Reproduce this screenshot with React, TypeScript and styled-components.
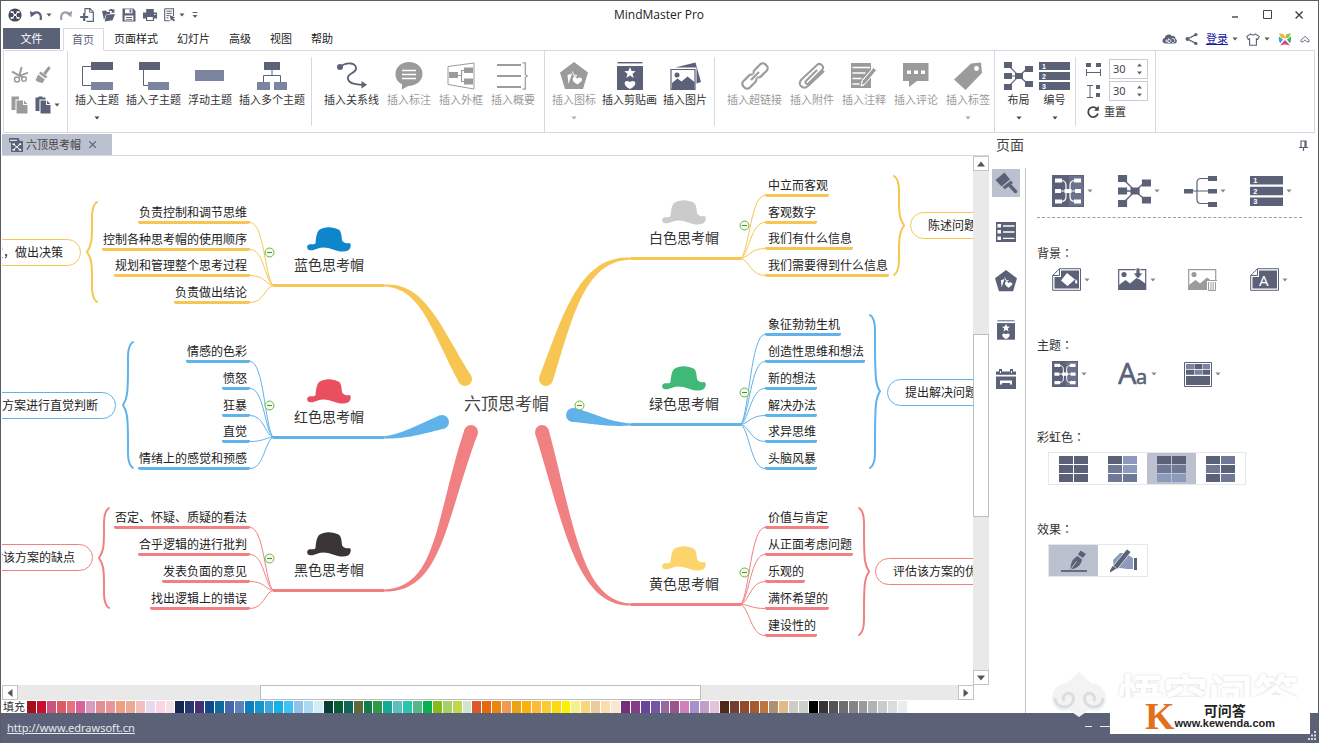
import React from "react";
import styled, { createGlobalStyle, css } from "styled-components";

const ink = "#5b6277";
const inkLight = "#7d84a0";
const mute = "#9b9b9b";
const rule = "#d8d9de";
const active = "#bcc1d0";

const GlobalStyle = createGlobalStyle`
  *, *::before, *::after { box-sizing: border-box; }
  body {
    margin: 0;
    background: #fff;
    color: #333;
    font-family: "Noto Sans", "Noto Sans CJK SC", sans-serif;
    font-size: 11px;
    line-height: 16px;
  }
  button {
    margin: 0;
    padding: 0;
    border: 0;
    background: none;
    color: inherit;
    font: inherit;
    cursor: pointer;
  }
  svg { display: block; flex: none; }
`;

/* ---------- frame ---------- */

const Window = styled.div`
  position: relative;
  display: flex;
  flex-direction: column;
  min-height: 100vh;
  border: 1px solid #5a5c66;
  border-bottom: 0;
  overflow: hidden;
`;

const TitleBar = styled.header`
  display: grid;
  grid-template-columns: 1fr auto 1fr;
  align-items: center;
  height: 27px;
  padding: 0 12px 0 7px;
`;

const QuickBar = styled.div`
  display: flex;
  align-items: center;
  gap: 7px;
`;

const QuickButton = styled.button`
  display: flex;
  align-items: center;
  gap: 3px;
  color: ${ink};
`;

const AppTitle = styled.h1`
  margin: 0;
  padding-left: 4px;
  font: 400 12px/16px "Open Sans", "Noto Sans", sans-serif;
  color: #222;
`;

const WindowControls = styled.div`
  display: flex;
  justify-content: flex-end;
  align-items: center;
  gap: 18px;
  color: #444;
`;

const MenuRow = styled.nav`
  display: flex;
  align-items: stretch;
  height: 22px;
  padding: 0 8px 0 2px;
`;

const FileButton = styled.button`
  width: 57px;
  height: 21px;
  margin-right: 3px;
  background: ${ink};
  color: #fff;
`;

const MenuTab = styled.button<{ $current?: boolean }>`
  position: relative;
  padding: 0 9px 0 10px;
  color: #222;
  ${(p) =>
    p.$current &&
    css`
      z-index: 1;
      margin-bottom: -1px;
      padding: 0 9px 0 8px;
      border: 1px solid ${rule};
      border-bottom-color: #fff;
      background: #fff;
      color: ${ink};
    `}
`;

const Account = styled.div`
  display: flex;
  align-items: center;
  gap: 8px;
  margin-left: auto;
  color: ${ink};
`;

const AccountItem = styled.div`
  display: flex;
  align-items: center;
  gap: 4px;
`;

const LoginLink = styled.a`
  color: #1a1a9c;
  text-decoration: underline;
`;

/* ---------- ribbon ---------- */

const Ribbon = styled.div`
  display: flex;
  height: 83px;
  margin: 0 3px 0 2px;
  border: 1px solid ${rule};
`;

const RibbonGroup = styled.div<{ $left: number; $right: number; $gap: number; $short?: boolean }>`
  position: relative;
  display: flex;
  align-items: flex-start;
  gap: ${(p) => p.$gap}px;
  padding: 11px ${(p) => p.$right}px 0 ${(p) => p.$left}px;
  &::after {
    content: "";
    position: absolute;
    right: 0;
    top: ${(p) => (p.$short ? 6 : 0)}px;
    bottom: ${(p) => (p.$short ? 6 : 0)}px;
    width: 1px;
    background: ${rule};
  }
`;

const RibbonButton = styled.button`
  display: flex;
  flex-direction: column;
  align-items: center;
  min-width: 31px;
  color: #333;
  white-space: nowrap;
  &:disabled {
    color: ${mute};
    cursor: default;
  }
`;

const IconBox = styled.span`
  display: flex;
  align-items: center;
  justify-content: center;
  height: 28px;
  margin-bottom: 2px;
  color: ${ink};
  button:disabled & {
    color: ${mute};
  }
`;

const CaretBox = styled.span`
  margin-top: 8px;
`;

const ClipGrid = styled.div`
  display: grid;
  grid-template-columns: 18px 24px;
  grid-auto-rows: 20px;
  gap: 10px 6px;
  align-items: center;
  padding-top: 3px;
`;

const ClipButton = styled(QuickButton)<{ $muted?: boolean }>`
  color: ${(p) => (p.$muted ? mute : ink)};
`;

const Spacing = styled.div`
  display: flex;
  flex-direction: column;
  gap: 2px;
  margin-top: -3px;
`;

const SpinLabel = styled.label`
  display: flex;
  align-items: center;
  gap: 8px;
  color: ${ink};
`;

const SpinBox = styled.span`
  display: flex;
  align-items: center;
  width: 39px;
  height: 20px;
  padding-right: 5px;
  border: 1px solid #c9cbd2;
`;

const SpinInput = styled.input`
  flex: 1;
  min-width: 0;
  height: 18px;
  padding: 0 0 0 3px;
  border: 0;
  outline: 0;
  background: none;
  color: #444;
  font: 11px/18px "Noto Sans", sans-serif;
`;

const ResetButton = styled.button`
  display: flex;
  align-items: center;
  gap: 4px;
  height: 18px;
  color: #333;
`;

/* ---------- workspace ---------- */

const Main = styled.main`
  display: flex;
  flex: 1;
`;

const Workspace = styled.section`
  display: flex;
  flex: 1;
  flex-direction: column;
  min-width: 0;
  padding-left: 1px;
`;

const DocTabs = styled.div`
  display: flex;
  height: 23px;
  padding-top: 1px;
  border-bottom: 1px solid ${rule};
`;

const DocTab = styled.div`
  display: flex;
  align-items: center;
  gap: 3px;
  width: 110px;
  padding-left: 7px;
  background: ${active};
  color: #444;
`;

const CloseTab = styled.button`
  margin-left: 2px;
  color: ${ink};
`;

const CanvasRow = styled.div`
  display: flex;
  flex: 1;
  min-height: 529px;
`;

const Canvas = styled.div`
  position: relative;
  flex: 1;
  overflow: hidden;
`;

const Track = styled.div<{ $vertical?: boolean }>`
  display: flex;
  flex-direction: ${(p) => (p.$vertical ? "column" : "row")};
  ${(p) => (p.$vertical ? "width: 16px;" : "height: 15px; margin-right: 15px;")}
  background: #e9e9e9;
`;

const ScrollButton = styled.button`
  display: flex;
  align-items: center;
  justify-content: center;
  width: 16px;
  height: 15px;
  border: 1px solid #c4c4c4;
  background: #fff;
  color: #555;
`;

const Thumb = styled.div<{ $grow: number }>`
  flex: ${(p) => p.$grow} 0 0;
  border: 1px solid #bdbdbd;
  background: #fff;
`;

const Slack = styled.div<{ $grow: number }>`
  flex: ${(p) => p.$grow} 0 0;
`;

const PaletteRow = styled.div`
  display: flex;
  align-items: center;
  gap: 2px;
  height: 13px;
  padding-left: 1px;
  line-height: 13px;
`;

const Swatches = styled.div`
  display: grid;
  grid-template-columns: repeat(89, 1fr);
  gap: 1px;
  flex: 0 1 880px;
  height: 12px;
`;

const Swatch = styled.button<{ $color: string }>`
  background: ${(p) => p.$color};
`;

/* ---------- mind map ---------- */

/* The map is scrolled inside its view; nodes keep their own map coordinates. */
const Stage = styled.div`
  position: absolute;
  left: -2px;
  top: -156px;
  width: 0;
  height: 0;
`;

const Links = styled.svg`
  position: absolute;
  left: 0;
  top: 0;
  overflow: visible;
`;

type Side = "left" | "right";

const Topic = styled.div<{ $side: Side; $x: number; $y: number; $color: string }>`
  position: absolute;
  top: ${(p) => p.$y - 17}px;
  ${(p) => (p.$side === "left" ? `right: -${p.$x}px; padding: 0 3px 0 1px;` : `left: ${p.$x}px; padding: 0 1px 0 3px;`)}
  border-bottom: 3px solid ${(p) => p.$color};
  border-radius: 0 0 2px 2px;
  color: #222;
  font-size: 12px;
  line-height: 16px;
  white-space: nowrap;
`;

const Hub = styled.div<{ $x: number; $y: number }>`
  position: absolute;
  left: ${(p) => p.$x}px;
  top: ${(p) => p.$y - 58}px;
  display: flex;
  flex-direction: column;
  align-items: center;
  gap: 3px;
  width: 110px;
  color: #333;
  font-size: 14px;
  line-height: 20px;
`;

const Pill = styled.div<{ $side: Side; $x: number; $y: number; $color: string }>`
  position: absolute;
  top: ${(p) => p.$y}px;
  ${(p) => (p.$side === "left" ? `right: -${p.$x}px;` : `left: ${p.$x}px;`)}
  height: 27px;
  padding: 0 17px;
  border: 1px solid ${(p) => p.$color};
  border-radius: 14px;
  background: #fff;
  color: #222;
  font-size: 12px;
  line-height: 25px;
  white-space: nowrap;
`;

const CentralTopic = styled.div`
  position: absolute;
  left: 464px;
  top: 392px;
  color: #444;
  font-size: 17px;
  line-height: 24px;
  white-space: nowrap;
`;

/* ---------- side panel ---------- */

const Panel = styled.aside`
  display: flex;
  flex: 0 0 329px;
  flex-direction: column;
  min-width: 0;
`;

const PanelHead = styled.div`
  display: flex;
  align-items: center;
  justify-content: space-between;
  height: 23px;
  padding: 1px 10px 0 7px;
`;

const PanelTitle = styled.h2`
  margin: 0;
  color: #444;
  font-size: 14px;
  line-height: 20px;
  font-weight: 400;
`;

const PanelBody = styled.div`
  display: flex;
  flex: 1;
`;

const PanelTabs = styled.div`
  display: flex;
  flex: 0 0 37px;
  flex-direction: column;
  gap: 21px;
  margin-top: 12px;
  padding: 1px 0 0 3px;
  border-right: 1px solid #c4c4c4;
`;

const PanelTab = styled.button<{ $current?: boolean }>`
  display: flex;
  align-items: center;
  justify-content: center;
  width: 28px;
  height: 28px;
  background: ${(p) => (p.$current ? active : "none")};
  color: ${ink};
`;

const PanelContent = styled.div`
  flex: 1;
  min-width: 0;
  padding: 19px 16px 0 11px;
`;

const ToolRow = styled.div`
  display: grid;
  grid-template-columns: repeat(3, 66px) auto;
  justify-content: start;
  align-items: center;
  padding-left: 15px;
`;

const Tool = styled.button`
  display: flex;
  align-items: center;
  gap: 3px;
  color: ${ink};
  &:disabled {
    padding-left: 4px;
    color: ${mute};
  }
`;

const Dashed = styled.hr`
  margin: 10px 0 27px;
  border: 0;
  border-top: 1px dashed #9a9da8;
`;

const Section = styled.section`
  min-height: 92px;
`;

const SectionTitle = styled.h3`
  margin: 0 0 5px;
  color: #333;
  font-size: 12px;
  line-height: 18px;
  font-weight: 400;
`;

const Colon = styled.span`
  font-family: "Noto Sans CJK TC", sans-serif;
  line-height: 1;
`;

const Choices = styled.div`
  display: inline-flex;
  margin-left: 11px;
  border: 1px solid #e6e7ea;
`;

const Choice = styled.label`
  position: relative;
  display: flex;
  align-items: center;
  justify-content: center;
  width: 49px;
  height: 31px;
  &:has(input:checked) {
    background: ${active};
  }
`;

const ChoiceInput = styled.input`
  position: absolute;
  inset: 0;
  margin: 0;
  opacity: 0;
`;

/* ---------- status bar and marks over it ---------- */

const StatusBar = styled.footer`
  display: flex;
  align-items: center;
  height: 30px;
  margin: 0 -1px;
  padding-left: 7px;
  background: ${ink};
`;

const SiteLink = styled.a`
  color: #e8eaf0;
  font-size: 11px;
  text-decoration: underline;
`;

const BadgeCard = styled.div`
  position: absolute;
  right: 8px;
  bottom: 9px;
  z-index: 2;
  display: flex;
  align-items: center;
  justify-content: center;
  width: 200px;
  height: 36px;
  background: #fff;
`;

const BadgeLetter = styled.span`
  color: #e2701c;
  font: 700 38px/36px "Liberation Serif", serif;
`;

const BadgeText = styled.span`
  display: flex;
  flex-direction: column;
  align-items: center;
  color: #222;
  font: 700 11px/11px "Liberation Sans", sans-serif;
`;

const BadgeName = styled.span`
  font: 700 14px/15px "Noto Sans CJK SC", sans-serif;
`;

const Ghost = styled.div`
  position: absolute;
  right: 20px;
  bottom: 24px;
  z-index: 1;
  display: flex;
  align-items: center;
  gap: 10px;
  color: #fff;
  font: 700 45px/50px "Noto Sans CJK SC", sans-serif;
  text-shadow: 0 0 3px #d4d4d4;
`;

const Dashes = styled.svg`
  position: absolute;
  right: 208px;
  bottom: 15px;
`;

const Grip = styled.svg`
  position: absolute;
  right: 1px;
  bottom: 2px;
  z-index: 3;
`;

/* ---------- icons ---------- */

const Caret = ({ color = "#555" }: { color?: string }) => (
  <svg width="6" height="4" viewBox="0 0 6 4">
    <path d="M0.5 0.5h5L3 3.5z" fill={color} />
  </svg>
);

type SvgProps = { w: number; h: number; children: React.ReactNode };
const Svg = ({ w, h, children }: SvgProps) => (
  <svg width={w} height={h} viewBox={`0 0 ${w} ${h}`} fill="none" stroke="none">
    {children}
  </svg>
);

const c = "currentColor";

const LogoIcon = () => (
  <Svg w={14} h={14}>
    <circle cx="7" cy="7" r="6.6" fill="#444a5c" />
    <path d="M4 4l6 6M10 4l-6 6" stroke="#fff" strokeWidth="1" />
    <path d="M2.6 3.2h3v1.8h-3zM8.6 3.2h3v1.8h-3zM2.6 9h3v1.8h-3zM8.6 9h3v1.8h-3zM5.6 6h3v2h-3z" fill="#fff" />
  </Svg>
);
const UndoIcon = ({ flip }: { flip?: boolean }) => (
  <Svg w={14} h={14}>
    <g transform={flip ? "translate(14 0) scale(-1 1)" : undefined} opacity={flip ? 0.6 : 1}>
      <path d="M4 5.4C8.5 2.8 13 5 11.6 12" stroke={c} strokeWidth="2.2" />
      <path d="M0.8 3l1 6.2 5-3.4z" fill={c} />
    </g>
  </Svg>
);
const NewIcon = () => (
  <Svg w={14} h={14}>
    <path d="M5 5V.7h5l3.3 3.2v9.4H6.5" stroke={c} strokeWidth="1.2" />
    <path d="M9.6.7v3.6h3.6" stroke={c} />
    <path d="M4.2 5v8M.2 9h8" stroke={c} strokeWidth="2.2" />
  </Svg>
);
const OpenIcon = () => (
  <Svg w={14} h={14}>
    <path d="M1 3l4-.5 1 1.6h3v2L5 6.5 3 12z" fill={c} />
    <path d="M5.4 6.8L14 6l-2.4 6.2-8 1.3z" fill={c} />
    <path d="M7.5 2.6C9 .8 11 .6 12.6 1.8l.8-.8v3.8H10l1.2-1.4c-1-.6-2-.6-3 .2z" fill={c} />
  </Svg>
);
const SaveIcon = () => (
  <Svg w={14} h={14}>
    <path d="M.5.5h11L13.5 3v10.5H.5z" fill={c} />
    <path d="M3 1.2h7.5v4H3zM2.6 7.6h8.8v5H2.6z" fill="#fff" />
    <path d="M7.6 1.4h1.7v3H7.6zM4 9h6v.9H4zM4 10.9h6v.9H4z" fill={c} />
  </Svg>
);
const PrintIcon = () => (
  <Svg w={14} h={14}>
    <path d="M3.2 1h7.6v3.6H3.2zM0 4.6h14v5.8H0z" fill={c} />
    <path d="M3.6 8.3h6.8v4.2H3.6z" fill="#fff" stroke={c} strokeWidth="1.2" />
    <path d="M11 6h1.6v1H11z" fill="#fff" />
  </Svg>
);
const ListDocIcon = () => (
  <Svg w={12} h={14}>
    <path d="M.7.7h8.8V8M.7.7v12h5" stroke={c} strokeWidth="1.1" />
    <path d="M2.4 3.2h5.4M2.4 5.4h5.4M2.4 7.6h3M2.4 9.8h2" stroke={c} />
    <path d="M5.6 7l5.6 2.6-2 .6 2 2-1.4 1.2-1.8-2L7 13z" fill={c} />
  </Svg>
);
const CustomIcon = () => (
  <Svg w={6} h={8}>
    <path d="M.5 1.5h5" stroke={c} />
    <path d="M.5 4h5L3 7z" fill={c} />
  </Svg>
);
const MinimizeIcon = () => (
  <Svg w={14} h={14}>
    <path d="M4 9h6" stroke={c} strokeWidth="1.4" />
  </Svg>
);
const MaximizeIcon = () => (
  <Svg w={14} h={14}>
    <path d="M3.5 2.5h8v8h-8z" stroke={c} />
  </Svg>
);
const CloseIcon = ({ size = 14 }: { size?: number }) => (
  <svg width={size} height={size} viewBox="0 0 14 14">
    <path d="M3.6 3.6l7 7M10.6 3.6l-7 7" stroke={c} strokeWidth="1.4" />
  </svg>
);
const CloudIcon = () => (
  <Svg w={15} h={12}>
    <path d="M4 10.6C-.6 10.4-.4 5.6 2.8 5 3 1.6 7.6.2 9.8 3c3-.6 4 1.4 3.6 2.8 2.4 1 1.6 4.8-1 4.8z" fill={c} />
    <path d="M4 7.2h2.6V5.6L9.4 8 6.6 10V8.8H4zM9.6 6a2 2 0 1 1 .6 3.4" stroke="#fff" strokeWidth=".8" />
  </Svg>
);
const ShareIcon = () => (
  <Svg w={13} h={14}>
    <path d="M11 2.6L2.4 7l8.6 4.4" stroke={c} strokeWidth="1.3" />
    <circle cx="10.8" cy="2.6" r="1.7" fill={c} />
    <circle cx="2.4" cy="7" r="1.9" fill={c} />
    <circle cx="10.8" cy="11.4" r="1.7" fill={c} />
  </Svg>
);
const ShirtIcon = () => (
  <Svg w={14} h={13}>
    <path d="M4.6 1C5.6 2.4 8.4 2.4 9.4 1l3.8 2.4-1.4 3-1.4-.6v6.4H3.6V5.8l-1.4.6-1.4-3z" stroke={c} strokeWidth="1.1" />
  </Svg>
);
const FlowerIcon = () => (
  <Svg w={14} h={14}>
    <path d="M1 1l5 1.6L7 6.4 3 5.4z" fill="#f3b32c" />
    <path d="M13 1L8 2.6 7 6.4l4-1z" fill="#9bc53a" />
    <path d="M1 4.6l4 3-2.6 3.6C.6 9.6.6 6.8 1 4.6z" fill="#36a5d9" />
    <path d="M13 4.6l-4 3 2.6 3.6c1.8-1.6 1.8-4.4 1.4-6.6z" fill="#3db06c" />
    <path d="M7 8l5 5.4-5-1.2-5 1.2z" fill="#dc3f78" />
  </Svg>
);
const CollapseIcon = () => (
  <Svg w={10} h={8}>
    <path d="M1 5l4-3.6L9 5v1.8H7L5 4.8l-2 2H1z" stroke={c} strokeWidth=".9" />
  </Svg>
);

const ScissorsIcon = () => (
  <Svg w={18} h={18}>
    <path d="M1 5.6l10.4 5.6M8.4 9.6L10.6 1" stroke={c} strokeWidth="2" />
    <path d="M8 10l9-3.4" stroke={c} strokeWidth="1.8" />
    <circle cx="6" cy="13.6" r="2.5" stroke={c} strokeWidth="1.5" />
    <circle cx="13" cy="13" r="2.3" stroke={c} strokeWidth="1.5" />
  </Svg>
);
const BrushIcon = () => (
  <Svg w={16} h={18}>
    <path d="M14.6 1.2L9.4 8" stroke={c} strokeWidth="3" />
    <path d="M5.6 5.6l6.8 5-1.6 1.8-6.8-5z" fill={c} />
    <path d="M3.2 8.4l6.6 5-2.6 4-1.4-1.4-.6 1-1.6-1.4-.6.6L.6 14z" fill={c} />
  </Svg>
);
const CopyIcon = () => (
  <Svg w={17} h={18}>
    <path d="M.5.5H8v3H4.5V14h-4z" fill={c} />
    <path d="M5.5 4.5H12V9h4.5v8.5h-11zM13 4.6L16.4 8H13z" fill={c} />
  </Svg>
);
const PasteIcon = () => (
  <Svg w={16} h={18}>
    <path d="M.5 1.5h3V.4h4v1.1h3v2h-6V15h-4z" fill={c} />
    <path d="M5.5 4.5H11V9h4.5v8.5h-10zM12 4.6L15.4 8H12z" fill={c} />
  </Svg>
);

const InsertTopicIcon = () => (
  <Svg w={32} h={28}>
    <path d="M10 4.5H1.5v19H10" stroke={c} />
    <path d="M10 0h22v8H10z" fill={c} />
    <path d="M10 20h22v8H10z" fill={inkLight} />
  </Svg>
);
const SubTopicIcon = () => (
  <Svg w={32} h={28}>
    <path d="M5.5 8v15.5H11" stroke={c} />
    <path d="M1 0h21v8H1z" fill={c} />
    <path d="M10 20h21v8H10z" fill={inkLight} />
  </Svg>
);
const FloatTopicIcon = () => (
  <Svg w={30} h={28}>
    <path d="M0 8h29v11H0z" fill={inkLight} />
  </Svg>
);
const MultiTopicIcon = () => (
  <Svg w={32} h={28}>
    <path d="M16 8v5.5M7.5 20v-6.500h17V20" stroke={c} />
    <path d="M8 0h16v8H8z" fill={c} />
    <path d="M1 20h13v8H1zM18 20h13v8H18z" fill={inkLight} />
  </Svg>
);
const RelationIcon = () => (
  <Svg w={30} h={28}>
    <path d="M3 5C10-1 20 1 19 7c-.8 5-9.600 4-8 10 1 4.600 9 6 15 5.800" stroke={c} strokeWidth="1.800" />
    <circle cx="3" cy="5" r="3" fill={c} />
    <path d="M24.500 19l5.500 3.800-5.500 3.800z" fill={c} />
  </Svg>
);
const CalloutIcon = () => (
  <Svg w={28} h={28}>
    <path d="M14 0c8 0 13.500 5 13.500 12S21 24 13 24l-6 3.500V22.300C3 20.300.5 17 .5 12 .5 5 6 0 14 0z" fill={c} />
    <path d="M7 8.500h14M7 12.500h14M7 16.500h14" stroke="#fff" strokeWidth="1.500" />
  </Svg>
);
const BoundaryIcon = () => (
  <Svg w={28} h={28}>
    <path d="M1 4.500L27 1v26L1 22.500z" stroke={c} />
    <path d="M10 13.500h4.500M17 8.500h-2.500v11H17" stroke={c} strokeWidth="1.200" />
    <path d="M2 10h9v6H2zM17 5.500h9V11h-9zM17 16.500h9v6h-9z" fill={c} />
  </Svg>
);
const SummaryIcon = () => (
  <Svg w={32} h={28}>
    <path d="M0 3h24M0 14h24M0 25h24" stroke={c} strokeWidth="2.200" />
    <path d="M25.500.8h2.800v11.700l2 1.500-2 1.500v11.700h-2.800" stroke={c} strokeWidth="1.200" />
  </Svg>
);
const PentagonIcon = ({ size = 28 }: { size?: number }) => (
  <svg width={size} height={size} viewBox="0 0 28 28">
    <path d="M14 0l14 10.600L23 27H5L0 10.600z" fill={c} />
    <path d="M7.500 13l4.500-1.500-1.500 4.500-2 6z" fill="#fff" />
    <path d="M17.500 22.500c-6-3-5.600-7-3-7.500 1.600-.2 2.400 1 3 2 .6-2.600 5.600-1.600 4.400 1.800z" fill="#fff" />
    <path d="M12.500 9.500l1 3.500 3.500.5-3.500 1.500" stroke="#fff" strokeWidth="1" fill="none" />
  </svg>
);
const ClipArtIcon = ({ w = 26, h = 28 }: { w?: number; h?: number }) => (
  <svg width={w} height={h} viewBox="0 0 26 28">
    <path d="M.5.700h25" stroke={c} strokeWidth="1.400" />
    <path d="M0 4h26v24H0z" fill={c} />
    <path d="M13 5l1.600 4 4.200.2-3.300 2.600 1.200 4.200-3.700-2.400L9.300 16l1.200-4.200-3.300-2.600 4.200-.2z" fill="#fff" />
    <path d="M13 27c-9-4.500-5-10.500 0-7 5-3.500 9 2.500 0 7z" fill="#fff" />
  </svg>
);
const PictureIcon = () => (
  <Svg w={31} h={28}>
    <path d="M5 5.500L25.500.500 31 20l-4.500 1.500V5.500z" fill={c} />
    <path d="M1 7.500h24v19.800H1z" fill="#fff" stroke={c} strokeWidth="1.200" />
    <path d="M2 21l5.500-4.500 4 3 6-5 7 5.500v7H2z" fill={c} />
    <circle cx="7" cy="13" r="2.500" fill={c} />
  </Svg>
);
const ChainIcon = () => (
  <Svg w={28} h={28}>
    <g transform="rotate(-45 14 14)" stroke={c} strokeWidth="2.200">
      <rect x="-1.500" y="9.500" width="15" height="9" rx="3.500" />
      <rect x="14.500" y="9.500" width="15" height="9" rx="3.500" />
    </g>
    <path d="M9.500 18.500l9-9" stroke="#fff" strokeWidth="4.500" />
    <path d="M10 18l8-8" stroke={c} strokeWidth="2.200" />
  </Svg>
);
const PaperclipIcon = () => (
  <Svg w={28} h={28}>
    <path
      d="M18.500 8.500L8 19c-1.500 1.600.8 4 2.500 2.400L24 8c3-3.400-1.600-8-5-5L3.500 17.500C-1 22.400 5 28.500 10 24L25.500 9.500"
      stroke={c}
      strokeWidth="2"
      strokeLinecap="round"
    />
  </Svg>
);
const NoteIcon = () => (
  <Svg w={26} h={28}>
    <path d="M0 1h20v7l-9 10-1.500 6H20v2H0z" fill={c} />
    <path d="M20 14v12h-9z" fill={c} />
    <path d="M1.500 5.500H19M1.500 11h13M1.500 16.500h9M1.500 22h7" stroke="#fff" strokeWidth="1.600" />
    <path d="M10 24l1.500-5.500L22.500 5.500l3 2.800L14.500 21.500z" fill={c} stroke="#fff" strokeWidth="1" />
  </Svg>
);
const CommentIcon = () => (
  <Svg w={26} h={28}>
    <path d="M0 1h25.500v18H14l-8 6v-6H0z" fill={c} />
    <path d="M4 8.500h4v3.500H4zM11 8.500h4v3.500h-4zM18 8.500h4v3.500h-4z" fill="#fff" />
  </Svg>
);
const TagIcon = () => (
  <Svg w={28} h={28}>
    <path d="M17 1.500L27 .500 28 11 11.500 28 0 17.500z" fill={c} />
    <circle cx="22.500" cy="6.500" r="2.400" fill="#fff" />
  </Svg>
);
const LayoutIcon = ({ w = 29, h = 28 }: { w?: number; h?: number }) => (
  <svg width={w} height={h} viewBox="0 0 29 28" fill="none">
    <path d="M4 3l11 11L4 25M4 14h11M24 6l-9 8 9 8" stroke={c} strokeWidth="1.200" />
    <path d="M0 0h8v6H0zM0 11h8v6H0zM0 22h8v6H0zM21 4h8v6h-8zM21 19h8v6h-8zM11 11h8v6h-8z" fill={c} />
  </svg>
);

const NumText = styled.text`
  font: 700 7px "Liberation Sans", sans-serif;
  fill: #fff;
`;
const NumberIcon = ({ w = 31, h = 28 }: { w?: number; h?: number }) => (
  <svg width={w} height={h} viewBox="0 0 31 28">
    <path d="M0 0h31v8H0zM0 10h31v8H0zM0 20h31v8H0z" fill={c} />
    <NumText x="3" y="6.500">1</NumText>
    <NumText x="3" y="16.500">2</NumText>
    <NumText x="3" y="26.500">3</NumText>
  </svg>
);
const HSpaceIcon = () => (
  <Svg w={15} h={15}>
    <path d="M0 1h5v4H0zM10 1h5v4h-5z" fill={c} />
    <path d="M.5 7v7M14.500 7v7M.5 10.500h14" stroke={c} />
  </Svg>
);
const VSpaceIcon = () => (
  <Svg w={15} h={15}>
    <path d="M1 1.500h6M1 13.500h6M4 1.500v12" stroke={c} />
    <path d="M10 1h4v4h-4zM10 9h4v4h-4z" fill={c} />
  </Svg>
);
const SpinArrows = () => (
  <Svg w={5} h={12}>
    <path d="M0 3.500h5L2.500.500zM0 8.500h5l-2.500 3z" fill="#666" />
  </Svg>
);
const ResetIcon = () => (
  <Svg w={14} h={14}>
    <path d="M11.300 4.200A5 5 0 1 0 12 8.500" stroke="#444" strokeWidth="1.800" />
    <path d="M12.800.800v5H8z" fill="#444" />
  </Svg>
);
const DocIcon = () => (
  <Svg w={14} h={14}>
    <path d="M0 0h9.500l1.500 3h3v11H2V4.500H0z" fill={ink} />
    <path d="M1 2.300h7M4 6l7.500 6M11.500 6L4 12" stroke="#fff" strokeWidth="1" />
    <path d="M3.500 5.500H6v1.600H3.500zM9.800 5.500h2.400v1.600H9.800zM3.500 11H6v1.600H3.500zM9.800 11h2.400v1.600H9.800z" fill="#fff" />
  </Svg>
);
const Arrow = ({ turn }: { turn: number }) => (
  <svg width="8" height="8" viewBox="0 0 8 8">
    <path d="M0 6.500h8L4 1.500z" fill="#555" transform={`rotate(${turn} 4 4)`} />
  </svg>
);

const PinIcon = () => (
  <Svg w={9} h={11}>
    <path d="M2 1h5v6.500H2zM0 7.500h9M4.500 7.500V11M6 1v6.500" stroke={ink} strokeWidth="1.200" />
  </Svg>
);
const PaintIcon = () => (
  <Svg w={24} h={24}>
    <path d="M10.500 1.500l5.500 7-8.500 7L1.500 9z" fill={c} />
    <path d="M17 9.500l2 2.500-8 6.300L8.500 16z" fill={c} />
    <path d="M15.500 14l6 6.500" stroke={c} strokeWidth="3.400" strokeLinecap="round" />
  </Svg>
);
const OutlineIcon = () => (
  <Svg w={20} h={20}>
    <path d="M0 0h20v20H0z" fill={c} />
    <path d="M1.500 2h3.500v3.500H1.500zM1.500 8h3.500v3.500H1.500zM1.500 14.500H5V18H1.500z" fill="#fff" />
    <path d="M7 4h11.500M7 10h11.500M7 16.300h11.500" stroke="#fff" strokeWidth="1.300" />
  </Svg>
);
const CalendarIcon = () => (
  <Svg w={20} h={20}>
    <path d="M0 2.500h20v3.300H0zM0 7.500h20V20H0z" fill={c} />
    <path d="M4.500 0v4.500M15.500 0v4.500" stroke={c} strokeWidth="3" />
    <path d="M4.500 2v2M15.500 2v2" stroke="#fff" />
    <path d="M4 11.500h12v4h-2v-1.500H6v1.500H4z" fill="#fff" />
  </Svg>
);

const MapStyleIcon = ({ size = 32 }: { size?: number }) => (
  <svg width={size} height={size} viewBox="0 0 32 32" fill="none">
    <path d="M0 0h32v32H0z" fill={c} />
    <path d="M17 1h14v30H17z" fill="#6b728b" />
    <path d="M9 5.500c4 0 5 2 5 5v11c0 3-1 5-5 5M23 5.500c-4 0-5 2-5 5v11c0 3 1 5 5 5M8 16h16" stroke="#fff" strokeWidth="1.200" />
    <path d="M3 3.500h7v4H3zM3 14h6v4H3zM3 24.500h7v4H3zM22 3.500h7v4h-7zM23 14h6v4h-6zM22 24.500h7v4h-7zM12.500 14h7v4h-7z" fill="#fff" />
  </svg>
);
const BranchIcon = () => (
  <Svg w={33} h={32}>
    <path d="M8 16h16M24 3.500h-7c-3 0-4 1-4 4v17c0 3 1 4 4 4h7" stroke={c} strokeWidth="1.200" />
    <path d="M0 14h9v4.500H0zM24 1h9v5h-9zM24 14h9v4.500h-9zM24 27h9v5h-9z" fill={c} />
  </Svg>
);
const FillPageIcon = ({ letter }: { letter?: boolean }) => (
  <Svg w={29} h={23}>
    <path d="M7.500.700h21v21.600H.700V7.500z" fill="#fff" stroke={c} />
    <path d="M9 2.500h18v18H2.500V9H9z" fill={c} />
    <path d="M.700 7.500h6.800V.700" stroke={c} />
    {letter ? (
      <text x="9" y="18" fill="#fff" fontSize="15" fontFamily="Noto Sans">A</text>
    ) : (
      <path d="M15 5l8 6.500-7.500 6.500L9 12.500zM24 11c1.600 2.500 2 4 .5 4.500s-2-1.500-.5-4.500z" fill="#fff" />
    )}
  </Svg>
);
const ImageIcon = ({ remove }: { remove?: boolean }) => (
  <Svg w={29} h={23}>
    <path d="M.700 1.700h27v19.600H.700z" fill="#fff" stroke={c} strokeWidth="1.200" />
    <path d="M1 17l6.500-5 4.500 3.500 7-6L28 16v5.500H1z" fill={c} />
    <circle cx="6" cy="6.500" r="2.600" fill={c} />
    {remove ? (
      <g>
        <path d="M19 12h10v11H19z" fill="#fff" />
        <path d="M18.500 12.500h10.500M20.500 14v8.500h7V14M23 14v8M25.200 14v8" stroke={c} />
      </g>
    ) : (
      <path d="M18 0h4v5h3l-5 6-5-6h3z" fill={c} stroke="#fff" strokeWidth=".800" />
    )}
  </Svg>
);
const FontIcon = () => (
  <Svg w={30} h={28}>
    <text x="0" y="24" fill={c} stroke={c} strokeWidth=".5" fontSize="29" fontFamily="Noto Sans">A</text>
    <text x="18" y="24" fill={c} stroke={c} strokeWidth=".5" fontSize="20" fontFamily="Noto Sans">a</text>
  </Svg>
);
const ThemeColorIcon = () => (
  <Svg w={28} h={25}>
    <path d="M.5.500h27v24H.500z" fill="#fff" stroke={c} />
    <path d="M2 2h8v5H2zM18.500 2H26v5h-7.500zM10.500 7.700H18v5h-7.500z" fill={inkLight} />
    <path d="M10.500 2H18v5h-7.500zM2 7.700h8v5H2zM18.500 7.700H26v5h-7.500zM2 14h24v9H2z" fill={c} />
  </Svg>
);
const RainbowIcon = ({ colors }: { colors: string[] }) => (
  <Svg w={29} h={26}>
    {colors.map((fill, i) => (
      <rect key={i} x={(i % 2) * 15} y={Math.floor(i / 2) * 9} width="14" height="8" fill={fill} />
    ))}
  </Svg>
);
const PenIcon = () => (
  <Svg w={28} h={24}>
    <path d="M1 22h26" stroke={ink} strokeWidth="1.800" />
    <path d="M10.500 20.500c0-7 2-10.500 7-13.500l4.500 3.500c-1 5.500-4 8-9.500 9.500z" fill={ink} />
    <path d="M18 5.500L20.500 1.500 26 5l-3.300 4z" fill={ink} />
    <path d="M11 20l5.500-7.500" stroke={active} />
  </Svg>
);
const HandPenIcon = () => (
  <Svg w={30} h={24}>
    <path d="M5 11l7-7h5l8 5v11h-6l-7-1-6 1z" fill="#8c9abc" />
    <path d="M26 9h3v12h-3z" fill={ink} />
    <path d="M19 0l4 3L9.500 20l-4.500-3z" fill={ink} stroke="#fff" strokeWidth=".700" />
    <path d="M4.500 17l4 2.500-6.500 4C1.500 21 3 20 4.500 17z" fill={ink} />
  </Svg>
);

const OwlIcon = () => (
  <svg width="58" height="46" viewBox="0 0 58 46">
    <path d="M29 1l12 11c12 1 16 10 15 18-2 10-12 12-17 9L29 46l-10-7C14 42 4 40 2 30 1 22 5 13 17 12z" fill="#f3f3f4" />
    <path d="M14 30a5 5 0 1 1 9-5c2 5-2 11-9 11-6 0-9-5-9-9M44 30a5 5 0 1 0-9-5c-2 5 2 11 9 11 6 0 9-5 9-9" fill="none" stroke="#dcdde0" strokeWidth="3" />
  </svg>
);

/* ---------- mind map data ---------- */

const Yellow = "#f7c652";
const Blue = "#5fb2ea";
const Red = "#f08082";

type Point = [number, number];

type Branch = {
  side: Side;
  name: string;
  hat: string;
  color: string;
  y: number;
  toggle: number;
  limb: [Point, Point, Point];
  topics: [string, number][];
  brace: [number, number, number];
  summary: string;
  pill: Point;
};

const branches: Branch[] = [
  {
    side: "left", name: "蓝色思考帽", hat: "#0f86cc", color: Yellow, y: 285, toggle: 252,
    limb: [[424, 285], [436, 330], [465, 379]],
    topics: [["负责控制和调节思维", 222], ["控制各种思考帽的使用顺序", 249], ["规划和管理整个思考过程", 275], ["负责做出结论", 302]],
    brace: [97, 202, 302], summary: "定，做出决策", pill: [81, 239],
  },
  {
    side: "left", name: "红色思考帽", hat: "#e8505f", color: Blue, y: 437, toggle: 405,
    limb: [[405, 436], [418, 430], [442, 422]],
    topics: [["情感的色彩", 361], ["愤怒", 388], ["狂暴", 415], ["直觉", 441], ["情绪上的感觉和预感", 468]],
    brace: [133, 342, 468], summary: "该方案进行直觉判断", pill: [116, 392],
  },
  {
    side: "left", name: "黑色思考帽", hat: "#3b3434", color: Red, y: 590, toggle: 558,
    limb: [[440, 590], [440, 520], [471, 432]],
    topics: [["否定、怀疑、质疑的看法", 527], ["合乎逻辑的进行批判", 554], ["发表负面的意见", 581], ["找出逻辑上的错误", 608]],
    brace: [109, 508, 608], summary: "评估该方案的缺点", pill: [93, 544],
  },
  {
    side: "right", name: "白色思考帽", hat: "#cbcbcb", color: Yellow, y: 258, toggle: 225,
    limb: [[582, 258], [568, 315], [546, 379]],
    topics: [["中立而客观", 195], ["客观数字", 222], ["我们有什么信息", 248], ["我们需要得到什么信息", 275]],
    brace: [894, 176, 275], summary: "陈述问题", pill: [910, 212],
  },
  {
    side: "right", name: "绿色思考帽", hat: "#3fb878", color: Blue, y: 424, toggle: 392,
    limb: [[605, 424], [597, 419], [573, 415]],
    topics: [["象征勃勃生机", 334], ["创造性思维和想法", 361], ["新的想法", 388], ["解决办法", 415], ["求异思维", 441], ["头脑风暴", 468]],
    brace: [870, 315, 468], summary: "提出解决问题", pill: [887, 379],
  },
  {
    side: "right", name: "黄色思考帽", hat: "#fdd36b", color: Red, y: 604, toggle: 572,
    limb: [[580, 604], [570, 530], [542, 432]],
    topics: [["价值与肯定", 527], ["从正面考虑问题", 554], ["乐观的", 581], ["满怀希望的", 608], ["建设性的", 635]],
    brace: [859, 508, 635], summary: "评估该方案的优点", pill: [875, 558],
  },
];

/* Outline of a cubic curve whose stroke widens from start to end. */
function taper(a: Point, b: Point, d: Point, e: Point, from: number, to: number) {
  const upper: string[] = [];
  const lower: string[] = [];
  for (let i = 0; i <= 28; i++) {
    const t = i / 28;
    const s = 1 - t;
    const at = (k: 0 | 1) => s * s * s * a[k] + 3 * s * s * t * b[k] + 3 * s * t * t * d[k] + t * t * t * e[k];
    const slope = (k: 0 | 1) => 3 * s * s * (b[k] - a[k]) + 6 * s * t * (d[k] - b[k]) + 3 * t * t * (e[k] - d[k]);
    const len = Math.hypot(slope(0), slope(1)) || 1;
    const half = (from + (to - from) * t) / 2;
    const nx = (-slope(1) / len) * half;
    const ny = (slope(0) / len) * half;
    upper.push(`${(at(0) + nx).toFixed(1)} ${(at(1) + ny).toFixed(1)}`);
    lower.unshift(`${(at(0) - nx).toFixed(1)} ${(at(1) - ny).toFixed(1)}`);
  }
  return `M${upper.concat(lower).join("L")}Z`;
}

function bracePath(x: number, top: number, bottom: number, dir: number) {
  const mid = (top + bottom) / 2;
  const inner = x + dir * 6;
  const tip = x + dir * 10;
  return (
    `M${x} ${top}C${inner} ${top + 4} ${inner - dir} ${top + 16} ${inner - dir} ${top + 24}` +
    `C${inner - dir} ${mid - 10} ${inner} ${mid - 6} ${tip} ${mid}` +
    `C${inner} ${mid + 6} ${inner - dir} ${mid + 10} ${inner - dir} ${bottom - 24}` +
    `C${inner - dir} ${bottom - 16} ${inner} ${bottom - 4} ${x} ${bottom}`
  );
}

const Toggle = ({ x, y }: { x: number; y: number }) => (
  <g>
    <circle cx={x} cy={y} r="4.500" fill="#f4fbef" stroke="#6db33f" />
    <path d={`M${x - 2.5} ${y}h5`} stroke="#4d8f2c" />
  </g>
);

const Hat = ({ color }: { color: string }) => (
  <svg width="44" height="25" viewBox="0 0 44 25">
    <path
      d="M8.500 16C7 18.500 4 16.500 2 17.500-.8 18.800-.2 22 2 23c3 1 6.500-.8 9.500-1.800 5-1.500 10-.2 14.500 1.300 5 1.800 11 3 15 1 3.500-2 3.500-7.500 1-7.500-3 .8-6.500-.5-7-3C34.600 8 34 4.500 32 2.800c-6-3.500-15-3.500-19.500 0C10 4.800 9.200 9 8.500 16z"
      fill={color}
    />
  </svg>
);

const MindMap = () => (
  <Stage>
    <Links width="1100" height="720">
      {branches.map((b) => {
        const left = b.side === "left";
        const topicX = left ? 250 : 765;
        const near = left ? 273 : 741;
        const far = left ? 384 : 631;
        const bend = left ? 14 : -14;
        const [p, q, end] = b.limb;
        return (
          <g key={b.name} fill="none">
            {b.topics.map(([text, y]) => (
              <path
                key={text}
                d={`M${topicX} ${y + 0.5}C${topicX + bend} ${y + 0.5} ${near - bend * 0.6} ${b.y - (b.y - y) * 0.15} ${near} ${b.y + 0.5}`}
                stroke={b.color}
                strokeWidth="1"
              />
            ))}
            <path d={`M${near} ${b.y + 0.5}H${far}`} stroke={b.color} strokeWidth="3" />
            <path d={taper([far, b.y + 0.5], p, q, end, 2, 14)} fill={b.color} />
            <circle cx={end[0]} cy={end[1]} r="7" fill={b.color} />
            <path d={bracePath(b.brace[0], b.brace[1], b.brace[2], left ? -1 : 1)} stroke={b.color} strokeWidth="2" strokeLinecap="round" />
            <Toggle x={left ? 269.5 : 744.5} y={b.toggle + 0.5} />
          </g>
        );
      })}
      <Toggle x={579.5} y={405.5} />
    </Links>
    <CentralTopic>六顶思考帽</CentralTopic>
    {branches.map((b) => (
      <React.Fragment key={b.name}>
        <Hub $x={b.side === "left" ? 274 : 629} $y={b.y}>
          <Hat color={b.hat} />
          {b.name}
        </Hub>
        {b.topics.map(([text, y]) => (
          <Topic key={text} $side={b.side} $x={b.side === "left" ? 250 : 765} $y={y} $color={b.color}>
            {text}
          </Topic>
        ))}
        <Pill $side={b.side} $x={b.pill[0]} $y={b.pill[1]} $color={b.color}>
          {b.summary}
        </Pill>
      </React.Fragment>
    ))}
  </Stage>
);

/* ---------- ribbon and panel data ---------- */

type Command = { label: string; icon: React.ReactNode; off?: boolean; menu?: boolean };
type Group = { left: number; right: number; gap: number; short?: boolean; items: Command[] };

const groups: Group[] = [
  {
    left: 7, right: 7, gap: 7, short: true,
    items: [
      { label: "插入主题", icon: <InsertTopicIcon />, menu: true },
      { label: "插入子主题", icon: <SubTopicIcon /> },
      { label: "浮动主题", icon: <FloatTopicIcon /> },
      { label: "插入多个主题", icon: <MultiTopicIcon /> },
    ],
  },
  {
    left: 12, right: 10, gap: 8,
    items: [
      { label: "插入关系线", icon: <RelationIcon /> },
      { label: "插入标注", icon: <CalloutIcon />, off: true },
      { label: "插入外框", icon: <BoundaryIcon />, off: true },
      { label: "插入概要", icon: <SummaryIcon />, off: true },
    ],
  },
  {
    left: 7, right: 8, gap: 6, short: true,
    items: [
      { label: "插入图标", icon: <PentagonIcon />, off: true, menu: true },
      { label: "插入剪贴画", icon: <ClipArtIcon /> },
      { label: "插入图片", icon: <PictureIcon /> },
    ],
  },
  {
    left: 12, right: 5, gap: 8,
    items: [
      { label: "插入超链接", icon: <ChainIcon />, off: true },
      { label: "插入附件", icon: <PaperclipIcon />, off: true },
      { label: "插入注释", icon: <NoteIcon />, off: true },
      { label: "插入评论", icon: <CommentIcon />, off: true },
      { label: "插入标签", icon: <TagIcon />, off: true, menu: true },
    ],
  },
  {
    left: 8, right: 6, gap: 5, short: true,
    items: [
      { label: "布局", icon: <LayoutIcon />, menu: true },
      { label: "编号", icon: <NumberIcon />, menu: true },
    ],
  },
];

const palette = (
  "a50f1c c8102e c9547f dc5a68 e8707a d9629a dc9bbd e09090 e8959c f0a080 eaab95 f2bfc0 e8d8ee fcd5e3 f6e1e6 " +
  "16264f 26386f 472f72 0f4a8c 0f6a9c 4668aa 5d82bc 0a80c4 1595cf 36a8dc 12b1e8 3ec2f4 90c2ea a8daf2 d2ecf8 " +
  "063f32 085c33 0f655c 5a6b35 0f7c4c 2e9a46 12aa92 5bbfbf 2bc5ac 55b888 08b050 82bd1c a6d068 c2d84c d2e4cf " +
  "d95a26 ea660c e8860f f09a52 eba30f fdb00c fcba3c fbcb32 fada10 fdf000 f6f08c fbd57c e9cd9c fbdcae fbe6d0 " +
  "742f76 853e86 6a4496 7755a5 9868a0 9a5590 d080b8 a890cc c0a0c8 e6c2d8 " +
  "50291d 713e2f 94492a a85a2e bd7540 b09070 e0bb88 cfccc6 cbd0c8 " +
  "000000 3a3535 545454 6e6e6e 858585 9a9a9a b0b4b4 cacaca d9dbdc ececec"
).split(" ");

const mid = "#6f7894";
const pale = "#8c9abc";
const rainbows = [
  { name: "单色", colors: [ink, ink, ink, ink, ink, ink] },
  { name: "双列", colors: [ink, pale, mid, pale, mid, mid] },
  { name: "渐变", colors: [ink, ink, mid, mid, pale, pale] },
  { name: "交错", colors: [ink, mid, mid, ink, ink, mid] },
];

export default function App() {
  return (
    <>
      <GlobalStyle />
      <Window>
        <TitleBar>
          <QuickBar>
            <QuickButton aria-label="MindMaster"><LogoIcon /></QuickButton>
            <QuickButton aria-label="撤销"><UndoIcon /><Caret /></QuickButton>
            <QuickButton aria-label="重做"><UndoIcon flip /></QuickButton>
            <QuickButton aria-label="新建"><NewIcon /></QuickButton>
            <QuickButton aria-label="打开"><OpenIcon /></QuickButton>
            <QuickButton aria-label="保存"><SaveIcon /></QuickButton>
            <QuickButton aria-label="打印"><PrintIcon /></QuickButton>
            <QuickButton aria-label="选项"><ListDocIcon /><Caret /></QuickButton>
            <QuickButton aria-label="自定义"><CustomIcon /></QuickButton>
          </QuickBar>
          <AppTitle>MindMaster Pro</AppTitle>
          <WindowControls>
            <button aria-label="最小化"><MinimizeIcon /></button>
            <button aria-label="最大化"><MaximizeIcon /></button>
            <button aria-label="关闭"><CloseIcon /></button>
          </WindowControls>
        </TitleBar>

        <MenuRow>
          <FileButton>文件</FileButton>
          <MenuTab $current>首页</MenuTab>
          <MenuTab>页面样式</MenuTab>
          <MenuTab>幻灯片</MenuTab>
          <MenuTab>高级</MenuTab>
          <MenuTab>视图</MenuTab>
          <MenuTab>帮助</MenuTab>
          <Account>
            <button aria-label="云"><CloudIcon /></button>
            <button aria-label="分享"><ShareIcon /></button>
            <AccountItem><LoginLink href="#login">登录</LoginLink><Caret /></AccountItem>
            <AccountItem><ShirtIcon /><Caret /></AccountItem>
            <FlowerIcon />
            <button aria-label="收起"><CollapseIcon /></button>
          </Account>
        </MenuRow>

        <Ribbon>
          <RibbonGroup $left={7} $right={9} $gap={0}>
            <ClipGrid>
              <ClipButton $muted aria-label="剪切"><ScissorsIcon /></ClipButton>
              <ClipButton $muted aria-label="格式刷"><BrushIcon /></ClipButton>
              <ClipButton $muted aria-label="复制"><CopyIcon /></ClipButton>
              <ClipButton aria-label="粘贴"><PasteIcon /><Caret /></ClipButton>
            </ClipGrid>
          </RibbonGroup>
          {groups.map((g) => (
            <RibbonGroup key={g.items[0].label} $left={g.left} $right={g.right} $gap={g.gap} $short={g.short}>
              {g.items.map((item) => (
                <RibbonButton key={item.label} disabled={item.off}>
                  <IconBox>{item.icon}</IconBox>
                  {item.label}
                  {item.menu && <CaretBox><Caret color={item.off ? "#aaa" : "#444"} /></CaretBox>}
                </RibbonButton>
              ))}
            </RibbonGroup>
          ))}
          <RibbonGroup $left={10} $right={8} $gap={0}>
            <Spacing>
              <SpinLabel>
                <HSpaceIcon />
                <SpinBox><SpinInput aria-label="水平间距" defaultValue="30" /><SpinArrows /></SpinBox>
              </SpinLabel>
              <SpinLabel>
                <VSpaceIcon />
                <SpinBox><SpinInput aria-label="垂直间距" defaultValue="30" /><SpinArrows /></SpinBox>
              </SpinLabel>
              <ResetButton><ResetIcon />重置</ResetButton>
            </Spacing>
          </RibbonGroup>
        </Ribbon>

        <Main>
          <Workspace>
            <DocTabs>
              <DocTab>
                <DocIcon />
                六顶思考帽
                <CloseTab aria-label="关闭标签"><CloseIcon size={13} /></CloseTab>
              </DocTab>
            </DocTabs>
            <CanvasRow>
              <Canvas><MindMap /></Canvas>
              <Track $vertical>
                <ScrollButton aria-label="向上"><Arrow turn={0} /></ScrollButton>
                <Slack $grow={164} />
                <Thumb $grow={181} />
                <Slack $grow={154} />
                <ScrollButton aria-label="向下"><Arrow turn={180} /></ScrollButton>
              </Track>
            </CanvasRow>
            <Track>
              <ScrollButton aria-label="向左"><Arrow turn={-90} /></ScrollButton>
              <Slack $grow={242} />
              <Thumb $grow={440} />
              <Slack $grow={257} />
              <ScrollButton aria-label="向右"><Arrow turn={90} /></ScrollButton>
            </Track>
            <PaletteRow>
              填充
              <Swatches>
                {palette.map((hex) => (
                  <Swatch key={hex} $color={`#${hex}`} aria-label={`#${hex}`} />
                ))}
              </Swatches>
            </PaletteRow>
          </Workspace>

          <Panel>
            <PanelHead>
              <PanelTitle>页面</PanelTitle>
              <button aria-label="固定"><PinIcon /></button>
            </PanelHead>
            <PanelBody>
              <PanelTabs>
                <PanelTab $current aria-label="页面"><PaintIcon /></PanelTab>
                <PanelTab aria-label="大纲"><OutlineIcon /></PanelTab>
                <PanelTab aria-label="图标"><PentagonIcon size={22} /></PanelTab>
                <PanelTab aria-label="剪贴画"><ClipArtIcon w={18} h={22} /></PanelTab>
                <PanelTab aria-label="任务"><CalendarIcon /></PanelTab>
              </PanelTabs>
              <PanelContent>
                <ToolRow>
                  <Tool aria-label="结构"><MapStyleIcon /><Caret color="#888" /></Tool>
                  <Tool aria-label="布局"><LayoutIcon w={33} h={32} /><Caret color="#888" /></Tool>
                  <Tool aria-label="连接线"><BranchIcon /><Caret color="#888" /></Tool>
                  <Tool aria-label="编号"><NumberIcon w={33} h={32} /><Caret color="#888" /></Tool>
                </ToolRow>
                <Dashed />
                <Section>
                  <SectionTitle>背景<Colon>：</Colon></SectionTitle>
                  <ToolRow>
                    <Tool aria-label="背景颜色"><FillPageIcon /><Caret color="#888" /></Tool>
                    <Tool aria-label="背景图片"><ImageIcon /><Caret color="#888" /></Tool>
                    <Tool aria-label="移除背景图片" disabled><ImageIcon remove /></Tool>
                    <Tool aria-label="水印"><FillPageIcon letter /><Caret color="#888" /></Tool>
                  </ToolRow>
                </Section>
                <Section>
                  <SectionTitle>主题<Colon>：</Colon></SectionTitle>
                  <ToolRow>
                    <Tool aria-label="主题样式"><MapStyleIcon size={26} /><Caret color="#888" /></Tool>
                    <Tool aria-label="主题字体"><FontIcon /><Caret color="#888" /></Tool>
                    <Tool aria-label="主题颜色"><ThemeColorIcon /><Caret color="#888" /></Tool>
                  </ToolRow>
                </Section>
                <Section>
                  <SectionTitle>彩虹色<Colon>：</Colon></SectionTitle>
                  <Choices>
                    {rainbows.map((r, i) => (
                      <Choice key={r.name}>
                        <ChoiceInput type="radio" name="rainbow" aria-label={r.name} defaultChecked={i === 2} />
                        <RainbowIcon colors={r.colors} />
                      </Choice>
                    ))}
                  </Choices>
                </Section>
                <Section>
                  <SectionTitle>效果<Colon>：</Colon></SectionTitle>
                  <Choices>
                    <Choice>
                      <ChoiceInput type="radio" name="effect" aria-label="标准" defaultChecked />
                      <PenIcon />
                    </Choice>
                    <Choice>
                      <ChoiceInput type="radio" name="effect" aria-label="手绘" />
                      <HandPenIcon />
                    </Choice>
                  </Choices>
                </Section>
              </PanelContent>
            </PanelBody>
          </Panel>
        </Main>

        <StatusBar>
          <SiteLink href="http://www.edrawsoft.cn">http://www.edrawsoft.cn</SiteLink>
        </StatusBar>

        <Ghost aria-hidden="true"><OwlIcon />悟空问答</Ghost>
        <Dashes width="25" height="2" viewBox="0 0 25 2">
          <path d="M0 0h7v1H0zM15 0h10v1H15z" fill="#e8eaf0" />
        </Dashes>
        <BadgeCard>
          <BadgeLetter>K</BadgeLetter>
          <BadgeText>
            <BadgeName>可问答</BadgeName>
            www.kewenda.com
          </BadgeText>
        </BadgeCard>
        <Grip width="10" height="10" viewBox="0 0 10 10">
          <path d="M7 0h2v2H7zM4 3.500h2v2H4zM7 3.500h2v2H7zM1 7h2v2H1zM4 7h2v2H4zM7 7h2v2H7z" fill="#d5d8e0" />
        </Grip>
      </Window>
    </>
  );
}
